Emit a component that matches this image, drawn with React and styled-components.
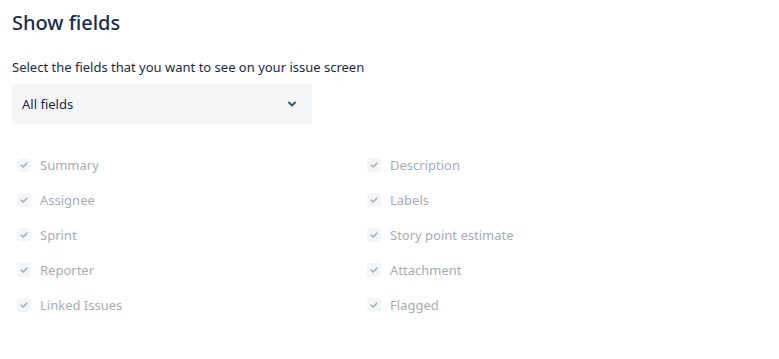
import React from 'react';
import styled, { createGlobalStyle } from 'styled-components';

const GlobalStyle = createGlobalStyle`
  body {
    margin: 0;
    background: #fff;
    font-family: "Noto Sans", "Liberation Sans", sans-serif;
    color: #172b4d;
  }
`;

const Page = styled.div`
  padding: 9px 12px;
`;

const Title = styled.h2`
  margin: 0;
  font-size: 20px;
  font-weight: 500;
  line-height: 28px;
  color: #172b4d;
`;

const Hint = styled.p`
  margin: 21px 0 0;
  font-size: 13px;
  line-height: 18px;
  color: #172b4d;
`;

const Select = styled.div`
  margin-top: 8px;
  width: 300px;
  height: 40px;
  box-sizing: border-box;
  padding: 0 14px 0 10px;
  background: #f4f5f7;
  border-radius: 3px;
  display: flex;
  align-items: center;
  justify-content: space-between;
  font-size: 13px;
  color: #172b4d;
`;

const FieldGrid = styled.div`
  margin-top: 23px;
  display: grid;
  grid-template-columns: 350px 350px;
  grid-auto-rows: 35px;
`;

const Field = styled.label`
  display: flex;
  align-items: center;
  padding-left: 5px;
  font-size: 13px;
  color: #a5adba;
`;

const Box = styled.span`
  width: 14px;
  height: 14px;
  border-radius: 3px;
  background: #f4f5f7;
  display: flex;
  align-items: center;
  justify-content: center;
  margin-right: 9px;
`;

const Check = () => (
  <svg width="10" height="10" viewBox="0 0 10 10">
    <path d="M2.2 5.2 L4.2 7 L7.8 3.2" fill="none" stroke="#a5adba" strokeWidth="1.6" strokeLinecap="round" strokeLinejoin="round" />
  </svg>
);

const Chevron = () => (
  <svg width="12" height="12" viewBox="0 0 12 12">
    <path d="M3 4.5 L6 7.5 L9 4.5" fill="none" stroke="#42526e" strokeWidth="2" strokeLinecap="round" strokeLinejoin="round" />
  </svg>
);

const fields = [
  'Summary', 'Description',
  'Assignee', 'Labels',
  'Sprint', 'Story point estimate',
  'Reporter', 'Attachment',
  'Linked Issues', 'Flagged',
];

export default function App() {
  return (
    <Page>
      <GlobalStyle />
      <Title>Show fields</Title>
      <Hint>Select the fields that you want to see on your issue screen</Hint>
      <Select>
        <span>All fields</span>
        <Chevron />
      </Select>
      <FieldGrid>
        {fields.map(f => (
          <Field key={f}>
            <Box><Check /></Box>
            {f}
          </Field>
        ))}
      </FieldGrid>
    </Page>
  );
}
